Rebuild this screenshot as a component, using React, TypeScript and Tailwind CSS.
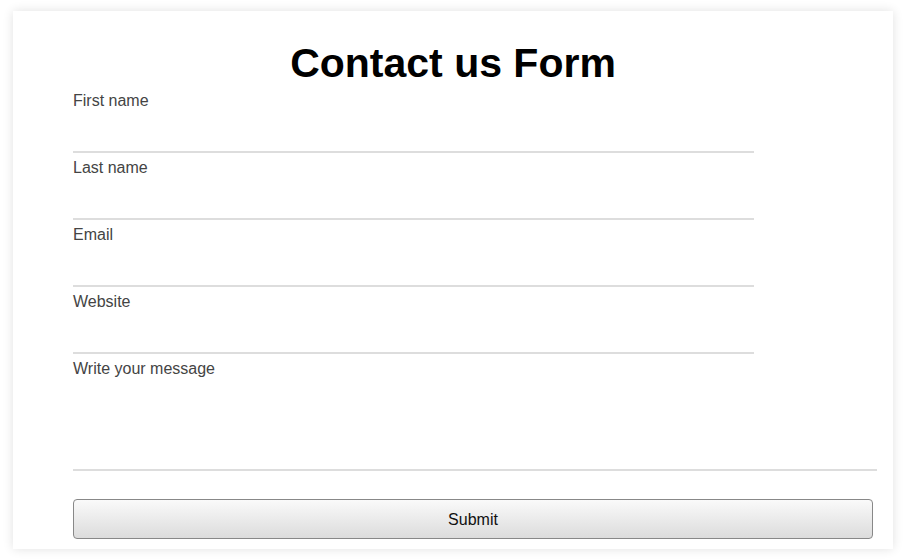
import React from "react";

void React;

const fields = ["First name", "Last name", "Email", "Website"];

function Field({ label }: { label: string }) {
  return (
    <div className="mb-[6px] flex flex-col">
      <label className="text-[16px] leading-[18px] text-[#444]">{label}</label>
      <input
        type="text"
        className="h-[43px] w-[681px] border-0 border-b-2 border-[#ddd] bg-transparent outline-none"
      />
    </div>
  );
}

export default function App() {
  return (
    <div className="min-h-[560px] bg-white pl-[13px] pt-[11px] font-['Liberation_Sans',Arial,sans-serif]">
      <div className="flex h-[538px] w-[880px] flex-col bg-white pl-[60px] pr-[16px] shadow-[0_0_10px_rgba(0,0,0,0.12)]">
        <h1 className="-ml-[60px] -mr-[16px] mt-[29px] text-center text-[41px] font-bold leading-[47px] text-black">
          Contact us Form
        </h1>
        <form className="mt-[5px] flex flex-col">
          {fields.map((f) => (
            <Field key={f} label={f} />
          ))}
          <div className="flex flex-col">
            <label className="text-[16px] leading-[18px] text-[#444]">Write your message</label>
            <textarea className="h-[93px] w-[804px] resize-none border-0 border-b-2 border-[#ddd] bg-transparent outline-none" />
          </div>
          <button
            type="button"
            className="mt-[28px] h-[40px] w-[800px] rounded-[4px] border border-[#888] bg-gradient-to-b from-[#fafafa] to-[#dcdcdc] pt-[1px] text-[16px] text-[#111]"
          >
            Submit
          </button>
        </form>
      </div>
    </div>
  );
}
